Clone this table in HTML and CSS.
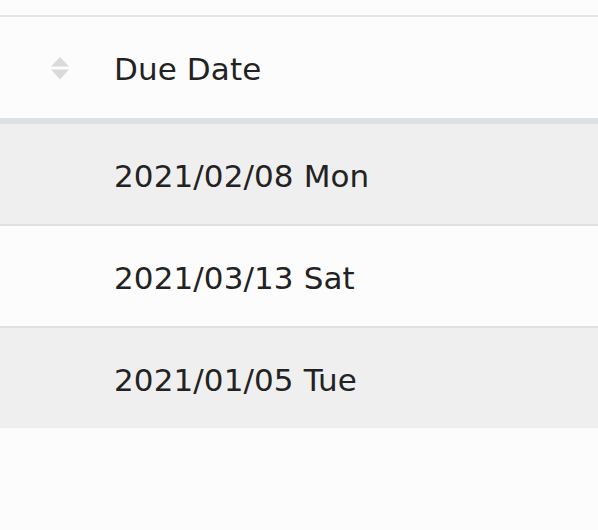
FILE: index.html
```html
<!DOCTYPE html>
<html>
<head>
<meta charset="utf-8">
<link rel="stylesheet" href="styles.css">
</head>
<body>
<div class="table">
  <div class="row head">
    <div class="cell sort">
      <svg width="18" height="23" viewBox="0 0 18 23">
        <path d="M9 0 L18 9.5 L0 9.5 Z" fill="#dadada"/>
        <path d="M0 12.5 L18 12.5 L9 22.5 Z" fill="#dadada"/>
      </svg>
    </div>
    <div class="cell text">Due Date</div>
  </div>
  <div class="row odd">
    <div class="cell"></div>
    <div class="cell text">2021/02/08 Mon</div>
  </div>
  <div class="row">
    <div class="cell"></div>
    <div class="cell text">2021/03/13 Sat</div>
  </div>
  <div class="row odd last">
    <div class="cell"></div>
    <div class="cell text">2021/01/05 Tue</div>
  </div>
</div>
</body>
</html>
```
FILE: styles.css
```css
html, body {
  margin: 0;
  padding: 0;
  background: #fcfcfc;
}
body {
  font-family: "DejaVu Sans", sans-serif;
  color: #222;
}
.table {
  margin-top: 15px;
  border-top: 2px solid #e3e5e8;
}
.row {
  display: grid;
  grid-template-columns: 114px 1fr;
  height: 100px;
  align-items: center;
  border-bottom: 2px solid #e0e0e0;
  box-sizing: content-box;
}
.row.head {
  height: 101px;
  border-bottom: 6px solid #dde1e6;
}
.row.odd {
  background: #efefef;
}
.row.last {
  border-bottom: none;
}
.cell.sort {
  display: flex;
  justify-content: center;
  padding-left: 6px;
  padding-top: 2px;
}
.cell.sort svg {
  display: block;
}
.text {
  font-size: 31px;
  line-height: 1;
  letter-spacing: 0.1px;
  padding-top: 4px;
}
```
